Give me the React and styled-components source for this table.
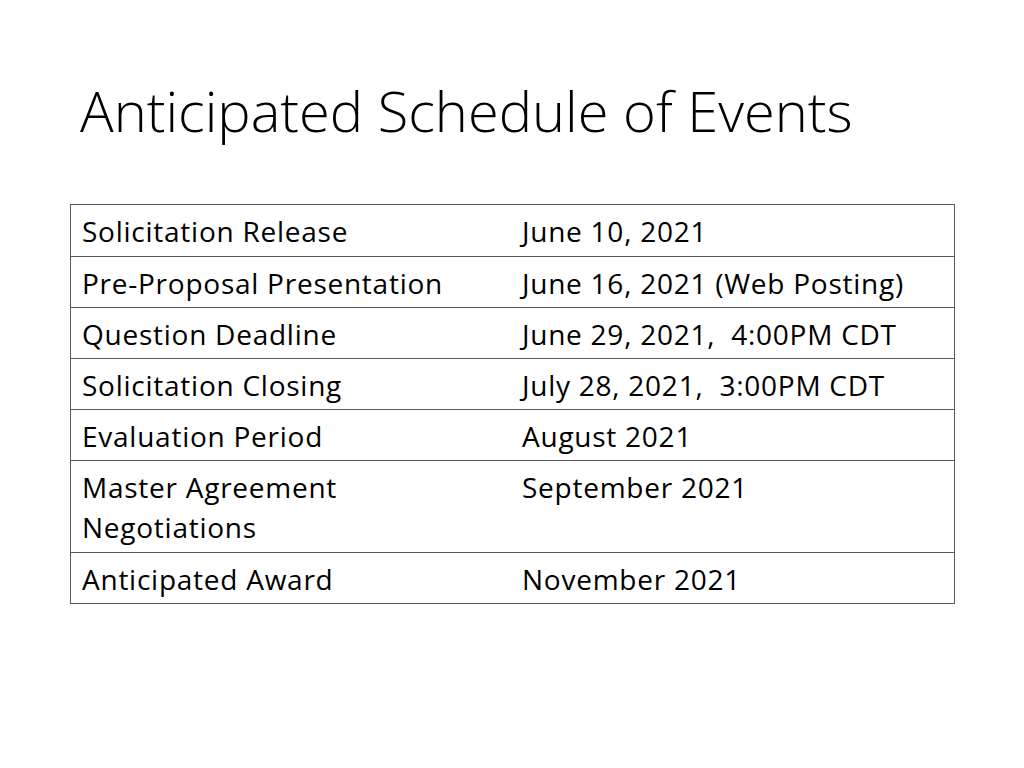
import React from 'react';
import styled, { createGlobalStyle } from 'styled-components';

const GlobalStyle = createGlobalStyle`
  html, body {
    margin: 0;
    padding: 0;
    background: #ffffff;
  }
  body {
    font-family: "Open Sans", "Liberation Sans", sans-serif;
    color: #000000;
  }
`;

const Slide = styled.div`
  width: 1024px;
  height: 768px;
  background: #ffffff;
  box-sizing: border-box;
  padding: 74px 70px 0 70px;
  display: flex;
  flex-direction: column;
  overflow: hidden;
`;

const Title = styled.h1`
  margin: 0 0 0 10px;
  font-family: "Open Sans", "Liberation Sans", sans-serif;
  font-weight: 300;
  font-size: 56px;
  line-height: 72px;
  letter-spacing: 0;
  color: #000000;
  white-space: nowrap;
`;

const Table = styled.div`
  margin-top: 58px;
  width: 885px;
  box-sizing: border-box;
  border: 1px solid #5a5a5a;
  display: flex;
  flex-direction: column;
`;

const Row = styled.div`
  display: grid;
  grid-template-columns: 440px 1fr;
  border-top: ${p => (p.first ? 'none' : '1px solid #5a5a5a')};
  padding: 6px 0 ${p => (p.first || p.tall ? '5px' : '4px')} 0;
`;

const Cell = styled.div`
  padding-left: 11px;
  font-size: 28px;
  line-height: 40px;
  letter-spacing: 0.75px;
  white-space: ${p => (p.keepSpaces ? 'pre' : 'normal')};
`;

const rows = [
  ['Solicitation Release', 'June 10, 2021'],
  ['Pre-Proposal Presentation', 'June 16, 2021 (Web Posting)'],
  ['Question Deadline', 'June 29, 2021,  4:00PM CDT'],
  ['Solicitation Closing', 'July 28, 2021,  3:00PM CDT'],
  ['Evaluation Period', 'August 2021'],
  ['Master Agreement\nNegotiations', 'September 2021'],
  ['Anticipated Award', 'November 2021'],
];

export default function App() {
  return (
    <>
      <GlobalStyle />
      <Slide>
        <Title>Anticipated Schedule of Events</Title>
        <Table>
          {rows.map(([event, date], i) => {
            const lines = event.split('\n');
            return (
              <Row key={event} first={i === 0} tall={lines.length > 1}>
                <Cell>
                  {lines.map(line => (
                    <div key={line}>{line}</div>
                  ))}
                </Cell>
                <Cell keepSpaces>{date}</Cell>
              </Row>
            );
          })}
        </Table>
      </Slide>
    </>
  );
}
